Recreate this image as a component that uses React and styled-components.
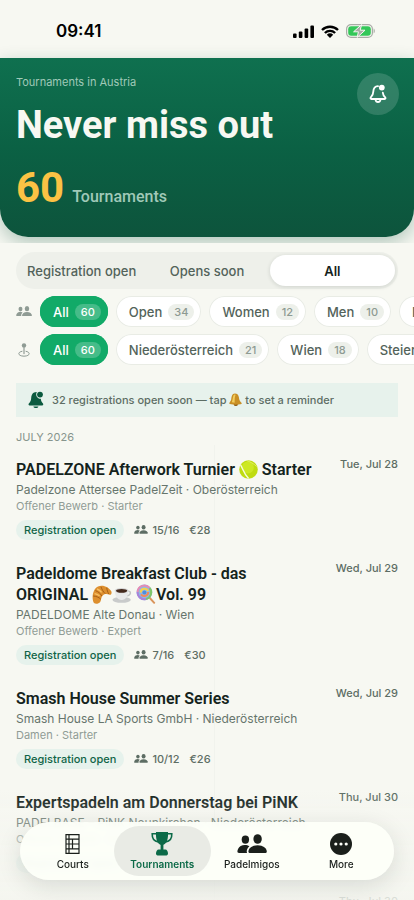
import React, { useState } from "react";
import styled, { createGlobalStyle } from "styled-components";

const headingFont = `Roboto, Inter, sans-serif`;

const GlobalStyle = createGlobalStyle`
  * {
    box-sizing: border-box;
  }
  body {
    margin: 0;
    background: #f7f8f2;
    color: #14231c;
    font-family: Inter, "Liberation Sans", sans-serif;
  }
  button {
    font-family: inherit;
    border: none;
    padding: 0;
    cursor: pointer;
  }
  h1, h2, h3, p, ul {
    margin: 0;
    padding: 0;
  }
  ul {
    list-style: none;
  }
`;

const Screen = styled.div`
  height: 100vh;
  display: flex;
  flex-direction: column;
  overflow: hidden;
`;

const TopArea = styled.div`
  flex-shrink: 0;
  overflow: hidden;
  padding-bottom: 6px;
`;
const StatusBar = styled.div`
  display: flex;
  align-items: center;
  justify-content: space-between;
  height: 58px;
  padding: 4px 38px 0 56px;
`;
const Clock = styled.span`
  font-size: 17px;
  font-weight: 600;
  color: #000;
`;
const StatusIcons = styled.div`
  display: flex;
  align-items: center;
  gap: 7px;
`;

const Hero = styled.header`
  display: flex;
  justify-content: space-between;
  align-items: flex-start;
  height: 179px;
  padding: 15px 15px 0 16px;
  border-radius: 0 0 28px 28px;
  background: linear-gradient(180deg, #0f704f 0%, #0b6144 50%, #0d543c 100%);
  box-shadow: 0 6px 18px rgba(13, 84, 60, 0.3);
  color: #f7f8f2;
`;
const Eyebrow = styled.p`
  font-size: 11px;
  line-height: 18px;
  color: #a0c9b8;
`;
const Headline = styled.h1`
  margin-top: 11px;
  font-family: ${headingFont};
  font-size: 38px;
  line-height: 46px;
  font-weight: 700;
`;
const Total = styled.p`
  display: flex;
  align-items: baseline;
  gap: 8px;
  margin-top: 17px;
  font-family: ${headingFont};
  font-size: 16px;
  line-height: 46px;
  font-weight: 500;
  color: #a0c9b8;
`;
const TotalNumber = styled.strong`
  font-size: 42px;
  font-weight: 700;
  color: #fbc244;
`;
const BellButton = styled.button`
  display: flex;
  align-items: center;
  justify-content: center;
  width: 42px;
  height: 42px;
  border-radius: 50%;
  background: rgba(255, 255, 255, 0.15);
  color: #fff;
`;

const Filters = styled.section`
  flex-shrink: 0;
  display: flex;
  flex-direction: column;
  gap: 7px;
  padding: 9px 0 0 16px;
`;
const Segments = styled.div`
  display: grid;
  grid-template-columns: repeat(3, 1fr);
  height: 37px;
  margin-right: 16px;
  padding: 3px;
  border-radius: 19px;
  background: #eef0ea;
`;
const Segment = styled.button`
  border-radius: 16px;
  font-size: 13px;
  font-weight: ${({ $active }) => ($active ? 600 : 500)};
  white-space: nowrap;
  color: ${({ $active }) => ($active ? "#14231c" : "#53635a")};
  background: ${({ $active }) => ($active ? "#fff" : "transparent")};
  box-shadow: ${({ $active }) =>
    $active ? "0 1px 4px rgba(20, 35, 28, 0.14)" : "none"};
`;
const ChipRow = styled.div`
  display: flex;
  align-items: center;
  gap: 8px;
  overflow: hidden;
`;
const RowIcon = styled.span`
  display: flex;
  justify-content: center;
  flex-shrink: 0;
  width: 16px;
  color: #8f9b94;
`;
const Chip = styled.button`
  display: flex;
  align-items: center;
  flex-shrink: 0;
  gap: 6px;
  height: 31px;
  padding: 0 7px 0 13px;
  border-radius: 16px;
  font-size: 13px;
  font-weight: 500;
  color: ${({ $active }) => ($active ? "#fff" : "#53635a")};
  background: ${({ $active }) => ($active ? "#12aa68" : "#fff")};
  box-shadow: inset 0 0 0 1px
    ${({ $active }) => ($active ? "#12aa68" : "#e9ece5")};
`;
const Count = styled.span`
  padding: 0 6px;
  border-radius: 8px;
  font-size: 11px;
  line-height: 16px;
  font-weight: 500;
  color: ${({ $active }) => ($active ? "#fff" : "#8d9a92")};
  background: ${({ $active }) =>
    $active ? "rgba(255, 255, 255, 0.22)" : "#edf0ea"};
`;

const Content = styled.main`
  flex: 1;
  min-height: 0;
  overflow-y: auto;
  scrollbar-width: none;
  padding: 18px 16px 0;
`;
const Notice = styled.p`
  display: flex;
  align-items: center;
  gap: 8px;
  height: 34px;
  padding: 0 12px;
  background: #e7f2ec;
  font-size: 11px;
  font-weight: 500;
  color: #5d6d64;
  svg {
    flex-shrink: 0;
  }
`;
const NoticeText = styled.span`
  svg {
    vertical-align: -2px;
  }
`;
const Month = styled.h2`
  margin-top: 12px;
  font-size: 11px;
  line-height: 16px;
  font-weight: 400;
  color: #87958d;
`;
const List = styled.ul`
  padding-bottom: 100px;
  background: linear-gradient(#f1f3ed, #f1f3ed) 52% 0 / 1px 100% no-repeat;
`;
const Item = styled.li`
  display: flex;
  align-items: flex-start;
  gap: 20px;
  padding: 14px 0 9px;
`;
const ItemBody = styled.div`
  flex: 1;
`;
const ItemTitle = styled.h3`
  font-family: ${headingFont};
  font-size: 16px;
  line-height: 21px;
  font-weight: 600;
  svg {
    vertical-align: -4px;
  }
`;
const Venue = styled.p`
  font-size: 12px;
  line-height: 20px;
  color: #66756c;
`;
const Category = styled.p`
  font-size: 11px;
  line-height: 13px;
  color: #909c95;
`;
const Meta = styled.div`
  display: flex;
  align-items: center;
  gap: 10px;
  margin-top: 7px;
  font-size: 11px;
  font-weight: 500;
  color: #5d6d64;
`;
const Status = styled.span`
  padding: 0 8px;
  border-radius: 10px;
  line-height: 20px;
  color: #0f6446;
  background: #e6f2ec;
`;
const Players = styled.span`
  display: flex;
  align-items: center;
  gap: 4px;
`;
const DateText = styled.time`
  flex-shrink: 0;
  font-size: 11px;
  line-height: 11px;
  font-weight: 500;
  color: #5d6d64;
`;

const Fade = styled.div`
  position: fixed;
  inset: auto 0 0;
  height: 110px;
  pointer-events: none;
  background: linear-gradient(rgba(244, 245, 239, 0), rgba(244, 245, 239, 0.85));
`;
const TabBar = styled.nav`
  position: fixed;
  left: 20px;
  right: 20px;
  bottom: 20px;
  display: flex;
  height: 58px;
  padding: 4px 8px;
  border-radius: 29px;
  background: rgba(253, 255, 249, 0.93);
  backdrop-filter: blur(3px);
  box-shadow: 0 6px 24px rgba(20, 35, 28, 0.13);
`;
const Tab = styled.button`
  flex: 1;
  display: flex;
  flex-direction: column;
  align-items: center;
  margin: 0 ${({ $active }) => ($active ? "-4px" : "0")};
  padding: 5px ${({ $active }) => ($active ? "4px" : "0")} 0;
  border-radius: 25px;
  font-size: 10px;
  line-height: 14px;
  font-weight: ${({ $active }) => ($active ? 600 : 500)};
  color: ${({ $active }) => ($active ? "#0c6a48" : "#1a1f1b")};
  background: ${({ $active }) => ($active ? "#e9ebe5" : "transparent")};
  svg {
    height: 26px;
  }
`;

const SignalIcon = () => (
  <svg width="21" height="13" viewBox="0 0 21 13" aria-hidden="true">
    <rect x="0" y="8.6" width="3.6" height="4.4" rx="1" />
    <rect x="5.8" y="6.4" width="3.6" height="6.6" rx="1" />
    <rect x="11.6" y="3.4" width="3.6" height="9.6" rx="1" />
    <rect x="17.4" y="0.4" width="3.6" height="12.6" rx="1" />
  </svg>
);

const WifiIcon = () => (
  <svg width="18" height="13" viewBox="0 0 18 13" aria-hidden="true">
    <g fill="none" stroke="#000" strokeWidth="2.4">
      <path d="M1 5 A11.5 11.5 0 0 1 17 5" />
      <path d="M3.9 8 A7.3 7.3 0 0 1 14.1 8" />
    </g>
    <path d="M5.8 9.8 A4.8 4.8 0 0 1 12.2 9.8 L9 13 Z" />
  </svg>
);

const BatteryIcon = () => (
  <svg width="30" height="14" viewBox="0 0 30 14" aria-hidden="true">
    <rect x="0.6" y="0.6" width="25.8" height="12.8" rx="4.4" fill="none" stroke="#a9aca6" strokeWidth="1.2" />
    <rect x="2.2" y="2.2" width="22.6" height="9.6" rx="3" fill="#34c759" />
    <path d="M27.6 4.6 C29.2 5.2 29.2 8.8 27.6 9.4 Z" fill="#a9aca6" />
    <path d="M15.6 0.6 L7.6 7.8 H12.4 L11.2 13.4 L19 6.2 H14.2 Z" fill="#a9aca6" stroke="#f7f8f2" strokeWidth="1" />
  </svg>
);

const BellBadgeIcon = () => (
  <svg width="18" height="20" viewBox="0 0 18 20" aria-hidden="true">
    <g fill="none" stroke="currentColor" strokeWidth="1.8" strokeLinecap="round" strokeLinejoin="round">
      <path d="M9 2.2 C5.6 2.4 4.4 5 4.3 7.6 C4.2 10.6 3.6 11.6 1.8 13.4 C1.2 14.2 1.4 15 2.4 15 H15.6 C16.6 15 16.8 14.2 16.2 13.4 C14.6 11.8 14 10.8 13.8 8.6" />
      <path d="M6.6 16.2 C7 18.6 11 18.6 11.4 16.2" />
    </g>
    <circle cx="12.8" cy="3.6" r="2.9" fill="currentColor" />
  </svg>
);

const BellSolidIcon = () => (
  <svg width="16" height="18" viewBox="0 0 16 18" fill="#0b5a3f" aria-hidden="true">
    <path d="M8.4 1 C4.8 1 3.4 3.8 3.2 7 C3 10 2.2 11 0.8 12.6 C0.2 13.6 0.6 14.4 1.6 14.4 H14.2 C15.2 14.4 15.6 13.6 15 12.6 C13.8 11.2 13 10.2 12.8 7.8 C9.6 8 7 4.6 8.8 1 Z" />
    <path d="M5.4 15.4 H10.4 C10 17.6 5.8 17.6 5.4 15.4 Z" />
    <circle cx="12" cy="3.6" r="2.9" />
  </svg>
);

const PeopleIcon = ({ width }) => (
  <svg width={width} viewBox="0 0 30 20" fill="currentColor" aria-hidden="true">
    <ellipse cx="8.4" cy="5.6" rx="3.7" ry="4.2" />
    <path d="M12.4 12.2 C10 10.6 6.4 10.4 3.6 12 C1.4 13.4 0.4 15.8 0.4 17.6 C0.4 18.6 1 19 2 19 H10 C9.2 16.6 10.2 14 12.4 12.2 Z" />
    <ellipse cx="20.6" cy="5" rx="4.2" ry="4.8" />
    <path d="M20.6 11.2 C15 11.2 11.4 14.6 11.4 17.4 C11.4 18.6 12.2 19 13.2 19 H28 C29 19 29.8 18.6 29.8 17.4 C29.8 14.6 26.2 11.2 20.6 11.2 Z" />
  </svg>
);

const PinIcon = () => (
  <svg width="12" height="14" viewBox="0 0 12 14" fill="none" stroke="currentColor" aria-hidden="true">
    <circle cx="6" cy="2.4" r="2.2" fill="currentColor" stroke="none" />
    <path d="M6 4 V10.6" strokeWidth="1.2" strokeLinecap="round" />
    <path d="M4 8.3 C-0.6 9 -0.6 13 6 13.2 C12.6 13 12.6 9 8 8.3" strokeWidth="1" strokeLinecap="round" />
  </svg>
);

const CourtIcon = () => (
  <svg width="15" viewBox="0 0 15 26" fill="none" stroke="currentColor" strokeWidth="1.2" aria-hidden="true">
    <path d="M1 3.6 H14 V22.4 H1 Z M1 8.2 H14 M1 13 H14 M1 17.8 H14 M7.5 8.2 V17.8 M4 3.6 V22.4" />
  </svg>
);

const TrophyIcon = () => (
  <svg width="22" viewBox="0 0 22 26" aria-hidden="true">
    <path d="M5 1 H17 C17.4 8 16 13 11 14.4 C6 13 4.6 8 5 1 Z M9.6 13 H12.4 V19 H9.6 Z M7.6 18.6 H14.4 C15.8 18.6 17 20.6 17 22.6 C17 23.8 16.4 24.4 15.4 24.4 H6.6 C5.6 24.4 5 23.8 5 22.6 C5 20.6 6.2 18.6 7.6 18.6 Z" fill="currentColor" />
    <path d="M5.6 2.8 H1.2 C1 7.4 3.2 10.4 7.4 11 M16.4 2.8 H20.8 C21 7.4 18.8 10.4 14.6 11" fill="none" stroke="currentColor" strokeWidth="1.6" />
  </svg>
);

const MoreIcon = () => (
  <svg width="24" viewBox="0 0 24 26" aria-hidden="true">
    <circle cx="12" cy="13" r="11" fill="currentColor" />
    <g fill="#fdfff9">
      <circle cx="6.8" cy="13" r="1.6" />
      <circle cx="12" cy="13" r="1.6" />
      <circle cx="17.2" cy="13" r="1.6" />
    </g>
  </svg>
);

const GoldBell = () => (
  <svg width="13" height="13" viewBox="0 0 13 13" role="img" aria-label="bell">
    <ellipse cx="6.8" cy="11.4" rx="2" ry="1.5" fill="#8a5a12" />
    <path d="M6 0.6 C9.6 0.6 9.8 4 10.4 6.8 C10.8 8.6 12.8 9.4 12.8 10.6 C12.6 12 0.6 12 0.2 10.6 C0.2 9.4 1.8 8.6 2.2 6.6 C2.6 4 2.8 0.6 6 0.6 Z" fill="#c98f25" />
    <path d="M5.4 1.6 C3.8 2.2 4 6.6 2.8 9.2 L5.6 9.8 C5.8 6.4 5.6 4 6.6 1.8 Z" fill="#f2cc5c" />
  </svg>
);

const TennisBall = () => (
  <svg width="19" height="19" viewBox="0 0 19 19" role="img" aria-label="tennis ball">
    <circle cx="9.5" cy="9.5" r="9.3" fill="#bfdc10" />
    <circle cx="8.8" cy="7.4" r="6" fill="#cde823" />
    <path d="M1.6 4.8 C4 9 5 14 9.6 18.4" fill="none" stroke="#f6fae0" strokeWidth="1.4" />
    <path d="M7.6 0.6 C11 1.4 15 4 17.8 6.6" fill="none" stroke="#e4f07a" strokeWidth="0.8" />
  </svg>
);

const Croissant = () => (
  <svg width="20" height="19" viewBox="0 0 20 19" role="img" aria-label="croissant">
    <path d="M2 18 C-0.6 14 0.4 4.4 6 1.6 C10.4 -0.6 17 1.8 19.4 6.6 C20 8.4 19 10.2 17.6 9.8 C15 8.6 12.6 8.6 10.8 10.4 C8.8 12.4 9.4 15 8.2 17 C6.8 19 3.4 19.4 2 18 Z" fill="#dd8f2e" />
    <path d="M3.4 5.6 C6 6.6 8.6 8.4 9.8 11 M9 1.8 C9.8 4.4 11.4 7 13.2 8.6 M1.2 11 C4 11.2 6.8 12.2 8.8 14.2 M14.8 2.8 C15 5 15.6 7 16.8 9" fill="none" stroke="#a65f18" strokeWidth="1" />
    <path d="M5 4 C6.6 4.6 8.4 5.8 9.6 7.4 M2.6 8.6 C4.4 8.8 6 9.6 7.6 10.8" fill="none" stroke="#f7c064" strokeWidth="1.4" />
  </svg>
);

const Coffee = () => (
  <svg width="20" height="19" viewBox="0 0 20 19" role="img" aria-label="coffee">
    <ellipse cx="9.6" cy="14.8" rx="9.2" ry="3" fill="#c9cbcb" />
    <path d="M15.6 6.2 C19.6 5.6 19.4 10.6 14.6 10.8" fill="none" stroke="#c2c4c4" strokeWidth="1.4" />
    <path d="M2.8 5.6 H16.4 C16.4 11 14 15 9.6 15 C5.2 15 2.8 11 2.8 5.6 Z" fill="#e9eaea" />
    <ellipse cx="9.6" cy="5.6" rx="6.8" ry="2.6" fill="#d4d5d5" />
    <ellipse cx="9.6" cy="5.8" rx="5.6" ry="1.9" fill="#442a1e" />
  </svg>
);

const Lollipop = () => (
  <svg width="20" height="20" viewBox="0 0 20 20" role="img" aria-label="lollipop">
    <path d="M12 12 L18.2 18.8" stroke="#d9955c" strokeWidth="2" strokeLinecap="round" />
    <circle cx="8.4" cy="8.4" r="7.8" fill="#8db7e8" />
    <g fill="none" strokeWidth="2">
      <path d="M1.6 8 A6.8 6.8 0 0 1 13.6 4" stroke="#e68bb4" />
      <path d="M13.6 4 A6.8 6.8 0 0 1 10 15" stroke="#7fc76b" />
      <path d="M10 15 A6.8 6.8 0 0 1 1.6 8" stroke="#a883d8" />
      <path d="M4.6 8.6 A4 4 0 0 1 12.2 7" stroke="#f5d04e" />
      <path d="M12.2 8 A4 4 0 0 1 5 10.4" stroke="#f08a5a" />
    </g>
    <circle cx="8.4" cy="8.4" r="2" fill="#4f8edb" />
  </svg>
);

const segments = ["Registration open", "Opens soon", "All"];

const categories = [
  { label: "All", count: 60 },
  { label: "Open", count: 34 },
  { label: "Women", count: 12 },
  { label: "Men", count: 10 },
  { label: "Mixed", count: 4 },
];

const regions = [
  { label: "All", count: 60 },
  { label: "Niederösterreich", count: 21 },
  { label: "Wien", count: 18 },
  { label: "Steiermark", count: 9 },
];

const tournaments = [
  {
    title: (
      <>
        PADELZONE Afterwork Turnier <TennisBall /> Starter
      </>
    ),
    venue: "Padelzone Attersee PadelZeit · Oberösterreich",
    category: "Offener Bewerb · Starter",
    players: "15/16",
    price: "€28",
    date: "Tue, Jul 28",
  },
  {
    title: (
      <>
        Padeldome Breakfast Club - das ORIGINAL <Croissant />
        <Coffee /> <Lollipop />
        Vol. 99
      </>
    ),
    venue: "PADELDOME Alte Donau · Wien",
    category: "Offener Bewerb · Expert",
    players: "7/16",
    price: "€30",
    date: "Wed, Jul 29",
  },
  {
    title: "Smash House Summer Series",
    venue: "Smash House LA Sports GmbH · Niederösterreich",
    category: "Damen · Starter",
    players: "10/12",
    price: "€26",
    date: "Wed, Jul 29",
  },
  {
    title: "Expertspadeln am Donnerstag bei PiNK",
    venue: "PADELBASE – PiNK Neunkirchen · Niederösterreich",
    category: "Offener Bewerb · Expert",
    players: "8/12",
    price: "€30",
    date: "Thu, Jul 30",
  },
  {
    title: "Donnerstag Open",
    venue: "Padelzone Wien · Wien",
    category: "Offener Bewerb · Starter",
    players: "6/16",
    price: "€28",
    date: "Thu, Jul 30",
  },
];

const tabs = [
  { label: "Courts", icon: <CourtIcon /> },
  { label: "Tournaments", icon: <TrophyIcon /> },
  { label: "Padelmigos", icon: <PeopleIcon width={30} /> },
  { label: "More", icon: <MoreIcon /> },
];

const ChipFilter = ({ icon, label, options }) => {
  const [selected, setSelected] = useState("All");

  return (
    <ChipRow role="group" aria-label={label}>
      <RowIcon>{icon}</RowIcon>
      {options.map((option) => {
        const active = selected === option.label;
        return (
          <Chip
            key={option.label}
            type="button"
            aria-pressed={active}
            $active={active}
            onClick={() => setSelected(option.label)}
          >
            {option.label}
            <Count $active={active}>{option.count}</Count>
          </Chip>
        );
      })}
    </ChipRow>
  );
};

const App = () => {
  const [segment, setSegment] = useState("All");
  const [tab, setTab] = useState("Tournaments");

  return (
    <Screen>
      <GlobalStyle />
      <TopArea>
        <StatusBar>
          <Clock>09:41</Clock>
          <StatusIcons>
            <SignalIcon />
            <WifiIcon />
            <BatteryIcon />
          </StatusIcons>
        </StatusBar>
        <Hero>
          <div>
            <Eyebrow>Tournaments in Austria</Eyebrow>
            <Headline>Never miss out</Headline>
            <Total>
              <TotalNumber>60</TotalNumber> Tournaments
            </Total>
          </div>
          <BellButton type="button" aria-label="Reminders">
            <BellBadgeIcon />
          </BellButton>
        </Hero>
      </TopArea>

      <Filters>
        <Segments>
          {segments.map((name) => (
            <Segment
              key={name}
              type="button"
              aria-pressed={segment === name}
              $active={segment === name}
              onClick={() => setSegment(name)}
            >
              {name}
            </Segment>
          ))}
        </Segments>
        <ChipFilter
          label="Category"
          icon={<PeopleIcon width={16} />}
          options={categories}
        />
        <ChipFilter label="Region" icon={<PinIcon />} options={regions} />
      </Filters>

      <Content>
        <Notice>
          <BellSolidIcon />
          <NoticeText>
            32 registrations open soon — tap <GoldBell /> to set a reminder
          </NoticeText>
        </Notice>
        <Month>JULY 2026</Month>
        <List>
          {tournaments.map((item) => (
            <Item key={item.venue}>
              <ItemBody>
                <ItemTitle>{item.title}</ItemTitle>
                <Venue>{item.venue}</Venue>
                <Category>{item.category}</Category>
                <Meta>
                  <Status>Registration open</Status>
                  <Players>
                    <PeopleIcon width={14} />
                    {item.players}
                  </Players>
                  <span>{item.price}</span>
                </Meta>
              </ItemBody>
              <DateText>{item.date}</DateText>
            </Item>
          ))}
        </List>
      </Content>

      <Fade />
      <TabBar>
        {tabs.map(({ label, icon }) => (
          <Tab
            key={label}
            type="button"
            $active={tab === label}
            onClick={() => setTab(label)}
          >
            {icon}
            {label}
          </Tab>
        ))}
      </TabBar>
    </Screen>
  );
};

export default App;
